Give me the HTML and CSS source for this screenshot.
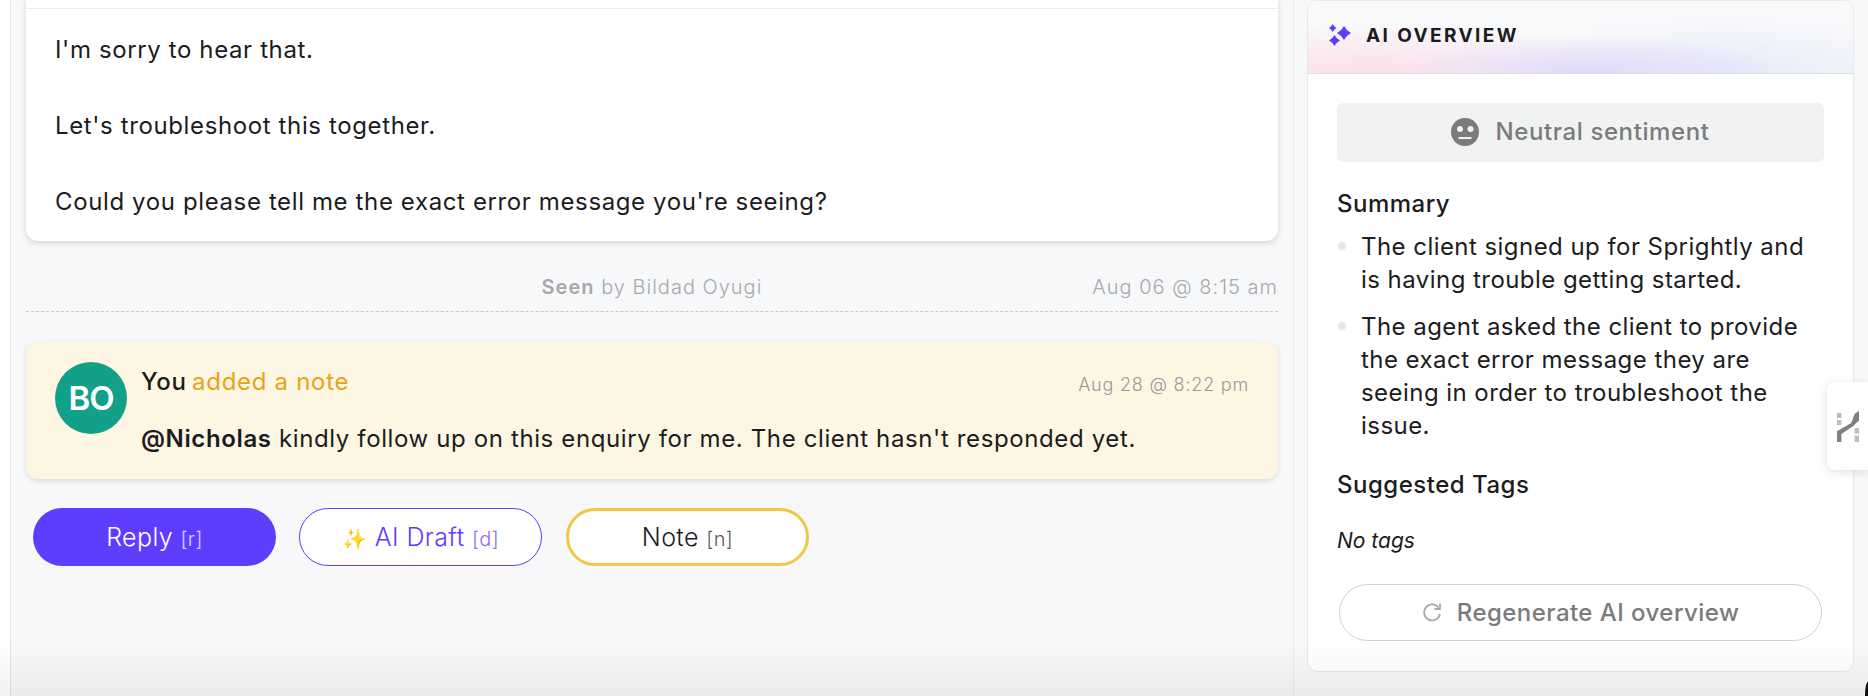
FILE: index.html
```html
<!DOCTYPE html>
<html lang="en">
<head>
    <meta charset="UTF-8">
    <meta name="viewport" content="width=device-width, initial-scale=1.0">
    <title>Conversation</title>
    <link rel="stylesheet" href="styles.css">
</head>
<body>

    <div class="page">
        <div class="left-gutter"></div>

        <main class="thread">
            <div class="message">
                <div class="message-top"></div>
                <div class="message-text">
                    <p>I'm sorry to hear that.</p>
                    <p>Let's troubleshoot this together.</p>
                    <p>Could you please tell me the exact error message you're seeing?</p>
                </div>
            </div>

            <div class="seen-row">
                <span class="seen-text"><b>Seen</b> by Bildad Oyugi</span>
                <span class="seen-time">Aug 06 @ 8:15 am</span>
            </div>

            <div class="note">
                <div class="avatar">BO</div>
                <div class="note-body">
                    <div class="note-head">
                        <span class="note-title"><b>You</b> <span class="note-action">added a note</span></span>
                        <span class="note-time">Aug 28 @ 8:22 pm</span>
                    </div>
                    <p class="note-text"><b>@Nicholas</b> kindly follow up on this enquiry for me. The client hasn't responded yet.</p>
                </div>
            </div>

            <div class="actions">
                <button class="action-button reply-button">Reply <span class="key">[r]</span></button>
                <button class="action-button draft-button"><span class="sparkle">✨</span> AI Draft <span class="key">[d]</span></button>
                <button class="action-button note-button">Note <span class="key">[n]</span></button>
            </div>
        </main>

        <aside class="side">
            <section class="overview">
                <header class="overview-head">
                    <svg class="spark-icon" viewBox="0 0 22 22" width="22" height="22">
                        <path fill="#5f3dff" d="M3.7 0Q5 2.7 7.4 4Q5 5.3 3.7 8Q2.4 5.3 0 4Q2.4 2.7 3.7 0zM15 2Q17.4 6.6 22 9Q17.4 11.4 15 16Q12.6 11.4 8 9Q12.6 6.6 15 2zM5.5 11Q7.4 14.6 11 16.5Q7.4 18.4 5.5 22Q3.6 18.4 0 16.5Q3.6 14.6 5.5 11z"/>
                    </svg>
                    <h2>AI OVERVIEW</h2>
                </header>

                <div class="overview-body">
                    <div class="sentiment">
                        <svg viewBox="0 0 28 28" width="28" height="28">
                            <circle cx="14" cy="14" r="14" fill="#7b7b7b"/>
                            <circle cx="9" cy="11" r="3" fill="#f1f2f2"/>
                            <circle cx="19.5" cy="11" r="3" fill="#f1f2f2"/>
                            <rect x="7.5" y="19" width="13" height="2" fill="#f1f2f2"/>
                        </svg>
                        <span>Neutral sentiment</span>
                    </div>

                    <h3>Summary</h3>
                    <ul class="summary-list">
                        <li>The client signed up for Sprightly and is having trouble getting started.</li>
                        <li>The agent asked the client to provide the exact error message they are seeing in order to troubleshoot the issue.</li>
                    </ul>

                    <h3 class="tags-title">Suggested Tags</h3>
                    <p class="no-tags">No tags</p>

                    <button class="regen-button">
                        <svg viewBox="0 0 20 19" width="20" height="19" fill="none" stroke="#a8aaaa" stroke-width="1.8">
                            <path d="M16.5 4.5A8 8 0 1 0 18 11"/>
                            <path d="M18 0.5V6H12.5"/>
                        </svg>
                        Regenerate AI overview
                    </button>
                </div>
            </section>
        </aside>
    </div>

    <div class="float-tab">
        <svg viewBox="0 0 22 31" width="22" height="31">
            <path fill="#7f7f7f" d="M0 20.3L14.3 12 17.7 2.7 22 0V9.3L16 15.3 4.4 23V31H0z"/>
            <path fill="#bdbdbd" d="M0 2h4.4v5H0zM0 9h4.4v5H0zM17.6 17H22v5.5h-4.4zM17.6 24.5H22V31h-4.4z"/>
        </svg>
    </div>

    <div class="bottom-fade"></div>
    <div class="window-corner"></div>

</body>
</html>
```

FILE: styles.css
```css
/* General Styles */
html, body {
    margin: 0;
    padding: 0;
    height: 100%;
    overflow: hidden;
}

body {
    font-family: 'Inter', 'Liberation Sans', sans-serif;
    background-color: #f7f8fa;
    color: #1c1c1e;
}

.page {
    display: flex;
    height: 696px;
}

.left-gutter {
    width: 10px;
    background-color: #fff;
    border-right: 1px solid #e6e8ea;
}

/* Thread */
.thread {
    width: 1252px;
    padding: 0 15px;
}

.message {
    background-color: #fff;
    border-radius: 0 0 12px 12px;
    box-shadow: 0 2px 6px rgba(0, 0, 0, 0.14);
    height: 241px;
}

.message-top {
    height: 8px;
    border-bottom: 1px solid #e8eaec;
}

.message-text {
    padding: 22px 29px 0;
}

.message-text p {
    margin: 0 0 38px;
    font-size: 24px;
    line-height: 38px;
    font-weight: 400;
    letter-spacing: 0.62px;
}

.seen-row {
    display: flex;
    justify-content: flex-end;
    align-items: center;
    height: 71px;
    box-sizing: border-box;
    border-bottom: 1px dashed #c9cbcd;
    padding-top: 22px;
    font-size: 20px;
    letter-spacing: 1px;
    color: #a7a9ab;
    font-weight: 300;
}

.seen-text {
    margin-right: 330px;
}

.seen-text b {
    font-weight: 600;
}

/* Note */
.note {
    display: flex;
    margin-top: 29px;
    height: 138px;
    box-sizing: border-box;
    background-color: #fcf6e3;
    border-radius: 12px;
    box-shadow: 0 2px 5px rgba(0, 0, 0, 0.12);
    padding: 21px 29px;
}

.avatar {
    width: 72px;
    height: 72px;
    flex-shrink: 0;
    border-radius: 50%;
    background-color: #12a088;
    color: #fff;
    font-size: 33px;
    font-weight: 600;
    letter-spacing: -1px;
    line-height: 72px;
    text-align: center;
}

.note-body {
    flex-grow: 1;
    margin-left: 14px;
}

.note-head {
    display: flex;
    justify-content: space-between;
    align-items: center;
    height: 38px;
}

.note-title {
    font-size: 24px;
    letter-spacing: 0.7px;
}

.note-title b {
    font-weight: 500;
    margin-right: -2px;
}

.note-action {
    color: #eba215;
    font-weight: 400;
}

.note-time {
    font-size: 18px;
    font-weight: 300;
    letter-spacing: 0.8px;
    color: #98999b;
    margin-top: 6px;
}

.note-text {
    margin: 21px 0 0;
    font-size: 24px;
    line-height: 36px;
    font-weight: 400;
    letter-spacing: 0.62px;
}

.note-text b {
    font-weight: 600;
}

/* Buttons */
.actions {
    display: flex;
    gap: 23px;
    margin: 29px 0 0 7px;
}

.action-button {
    width: 243px;
    height: 58px;
    border-radius: 29px;
    font-family: inherit;
    font-size: 25px;
    font-weight: 300;
    letter-spacing: 0.4px;
    cursor: pointer;
    box-sizing: border-box;
}

.action-button .key {
    font-size: 20px;
    opacity: 0.75;
}

.reply-button {
    background-color: #5f3dff;
    color: #fff;
    border: none;
}

.draft-button {
    background-color: #fff;
    color: #5f3dff;
    border: 1px solid #5f3dff;
}

.sparkle {
    font-size: 20px;
}

.note-button {
    background-color: #fff;
    color: #1c1c1e;
    border: 3px solid #f3c644;
    margin-left: 1px;
}

/* AI Overview */
.side {
    border-left: 1px solid #e6e8ea;
    padding-left: 13px;
}

.overview {
    width: 547px;
    height: 672px;
    box-sizing: border-box;
    background-color: #fff;
    border: 1px solid #e6e8ea;
    border-radius: 10px;
    overflow: hidden;
}

.overview-head {
    display: flex;
    align-items: center;
    gap: 15px;
    height: 73px;
    box-sizing: border-box;
    padding: 0 0 4px 21px;
    border-bottom: 1px solid #dcdde3;
    background:
        radial-gradient(ellipse 190px 38px at 52% 100%, #e0d9f9 0, rgba(224, 217, 249, 0) 100%),
        radial-gradient(ellipse 270px 50px at 12% 100%, #fbdfeb 0, rgba(251, 223, 235, 0) 100%),
        radial-gradient(ellipse 220px 52px at 76% 100%, #e6e9fa 0, rgba(230, 233, 250, 0) 100%),
        #f8f9fb;
}

.overview-head h2 {
    margin: 0;
    font-size: 19px;
    font-weight: 700;
    letter-spacing: 2.4px;
}

.overview-body {
    padding: 29px 29px 0 29px;
}

.sentiment {
    display: flex;
    align-items: center;
    justify-content: center;
    gap: 16px;
    height: 59px;
    padding-bottom: 2px;
    box-sizing: border-box;
    background-color: #f1f2f2;
    border-radius: 6px;
    color: #7b7b7b;
    font-size: 24px;
    font-weight: 500;
    letter-spacing: 0.6px;
}

.overview-body h3 {
    margin: 26px 0 0;
    font-size: 24px;
    line-height: 32px;
    font-weight: 500;
    letter-spacing: 0.5px;
}

.summary-list {
    margin: 10px 0 0;
    padding: 0;
    list-style: none;
}

.summary-list li {
    position: relative;
    padding-left: 24px;
    margin-bottom: 14px;
    font-size: 24px;
    line-height: 33px;
    letter-spacing: 0.45px;
}

.summary-list li::before {
    content: '';
    position: absolute;
    left: 1px;
    top: 12px;
    width: 8px;
    height: 8px;
    border-radius: 50%;
    background-color: #e6e8e8;
}

.overview-body .tags-title {
    margin-top: 27px;
}

.no-tags {
    margin: 27px 0 0;
    font-size: 21px;
    line-height: 26px;
    font-style: italic;
}

.regen-button {
    display: flex;
    align-items: center;
    justify-content: center;
    gap: 15px;
    width: 483px;
    height: 57px;
    margin: 30px 0 0 2px;
    background-color: #fff;
    border: 1px solid #cfd0d1;
    border-radius: 29px;
    color: #7b7b7b;
    font-family: inherit;
    font-size: 24px;
    font-weight: 500;
    letter-spacing: 0.45px;
    cursor: pointer;
}

/* Floating tab */
.float-tab {
    position: absolute;
    top: 382px;
    left: 1827px;
    width: 41px;
    height: 88px;
    display: flex;
    align-items: center;
    justify-content: flex-end;
    padding-right: 9px;
    box-sizing: border-box;
    background-color: #fff;
    border-radius: 8px 0 0 8px;
    box-shadow: 0 2px 10px rgba(0, 0, 0, 0.12);
}

/* Window edge */
.bottom-fade {
    position: absolute;
    left: 0;
    right: 0;
    bottom: 0;
    height: 56px;
    background: linear-gradient(to bottom, rgba(0, 0, 0, 0), rgba(0, 0, 0, 0.05));
    pointer-events: none;
}

.window-corner {
    position: absolute;
    right: 0;
    bottom: 0;
    width: 3px;
    height: 14px;
    background-color: #111;
    border-radius: 100% 0 0 0;
}
```
